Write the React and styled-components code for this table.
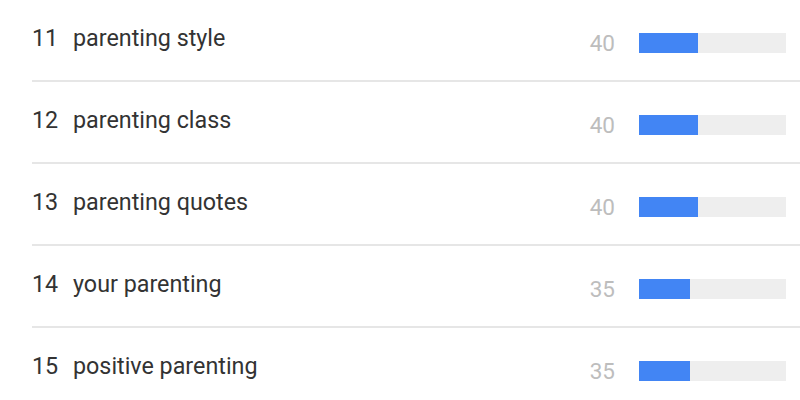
import React from "react"
import styled, { createGlobalStyle } from "styled-components"

const GlobalStyle = createGlobalStyle`
  html, body {
    margin: 0;
    padding: 0;
    background: #fff;
    overflow: hidden;
  }
  body {
    font-family: Roboto, "Liberation Sans", Arial, sans-serif;
  }
`

const List = styled.div`
  width: 800px;
  height: 400px;
  padding-left: 32px;
  box-sizing: border-box;
  overflow: hidden;
`

const Row = styled.div`
  display: flex;
  align-items: center;
  height: 80px;
  padding-right: 14px;
  border-bottom: 2px solid #e6e6e6;
`

const Term = styled.div`
  flex: 1;
  display: flex;
  align-items: center;
  padding-bottom: 4px;
  font-size: 23.3px;
  color: #333;
`

const Rank = styled.span`
  width: 41px;
`

const Label = styled.span``

const Score = styled.div`
  display: flex;
  align-items: center;
  gap: 24px;
  padding-top: 5px;
`

const Value = styled.span`
  font-size: 22.5px;
  color: #bdbdbd;
`

const Track = styled.div`
  width: 147px;
  height: 20px;
  background: #eeeeee;
`

const Fill = styled.div`
  height: 100%;
  background: #4285f4;
`

const rows = [
  { rank: 11, term: "parenting style", value: 40 },
  { rank: 12, term: "parenting class", value: 40 },
  { rank: 13, term: "parenting quotes", value: 40 },
  { rank: 14, term: "your parenting", value: 35 },
  { rank: 15, term: "positive parenting", value: 35 },
]

const App = () => (
  <>
    <GlobalStyle />
    <List>
      {rows.map(r => (
        <Row key={r.rank}>
          <Term>
            <Rank>{r.rank}</Rank>
            <Label>{r.term}</Label>
          </Term>
          <Score>
            <Value>{r.value}</Value>
            <Track>
              <Fill style={{ width: `${r.value}%` }} />
            </Track>
          </Score>
        </Row>
      ))}
    </List>
  </>
)

export default App
